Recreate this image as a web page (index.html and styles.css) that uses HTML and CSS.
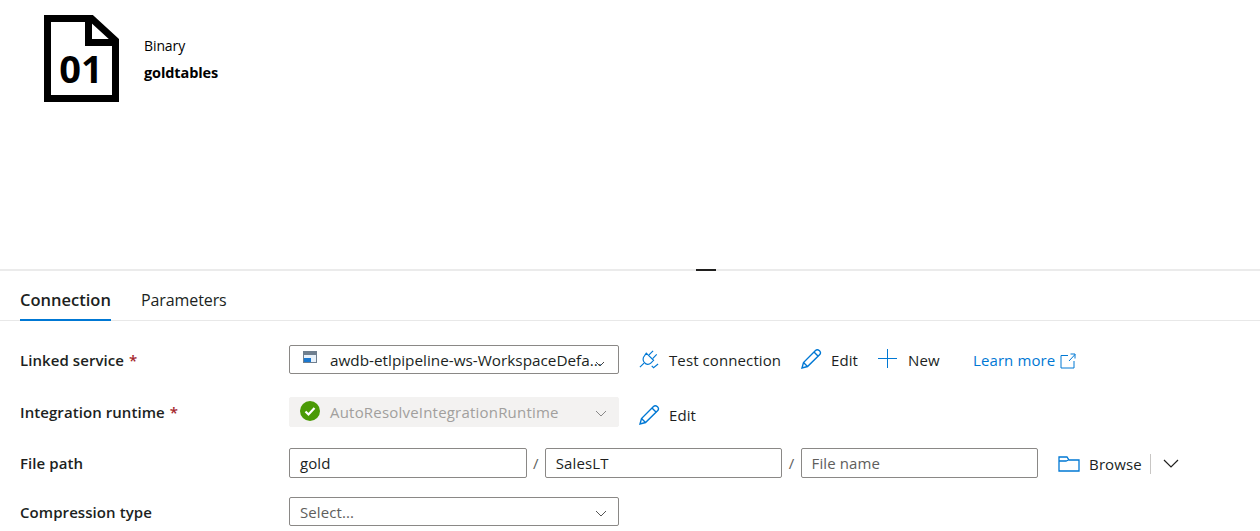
FILE: index.html
```html
<!DOCTYPE html>
<html lang="en-US">
<head>
<title>Binary dataset goldtables</title>
<meta charset="utf-8">
<link rel="stylesheet" href="styles.css">
</head>
<body>

<!-- dataset canvas -->
<div class="canvas">
  <svg class="file-icon" width="75" height="87" viewBox="0 0 75 87">
    <path d="M3.500 3.500H47.500L71.500 25.500V83.500H3.500Z" fill="#fff" stroke="#000" stroke-width="7"/>
    <path d="M44.500 3.500V27.500H71.500" fill="none" stroke="#000" stroke-width="7"/>
    <text x="37" y="68" text-anchor="middle" class="file-digits">01</text>
  </svg>
  <div class="dataset-info">
    <div class="dataset-type">Binary</div>
    <div class="dataset-name">goldtables</div>
  </div>
</div>

<div class="splitter"><span class="splitter-grip"></span></div>

<div class="tabs">
  <span class="tab tab-active">Connection</span>
  <span class="tab">Parameters</span>
</div>

<div class="form">

  <div class="row row-linked">
    <label class="row-label">Linked service <span class="req">*</span></label>
    <div class="field field-wide">
      <svg class="svc-icon" width="14" height="12" viewBox="0 0 14 12">
        <rect width="14" height="12" fill="#6f7f8f"/>
        <rect x="1" y="4" width="12" height="7" fill="#e8f1fa"/>
        <rect x="1" y="7" width="7" height="4" fill="#1a78d0"/>
      </svg>
      <span class="field-text field-clip">awdb-etlpipeline-ws-WorkspaceDefa...</span>
      <svg class="chev chev-linked" width="10" height="6" viewBox="0 0 10 6"><path d="M1 1L5 5L9 1" fill="none" stroke="#444" stroke-width="1"/></svg>
    </div>
    <div class="actions actions-linked">
      <span class="action action-test">
        <svg class="action-icon" width="20" height="20" viewBox="1 2.500 22 20" fill="none" stroke="#0078d4" stroke-width="1.300">
          <path d="M9 6L17 14L14 17C12 19 9 19 7 16.500C5 14.500 5 11 7 9Z"/>
          <path d="M12 8L16.500 3.500M16 12L20.500 7.500M6.500 17L2 21.500"/>
          <path d="M15 20L17 22L22 18"/>
        </svg>
        Test connection
      </span>
      <span class="action action-edit">
        <svg class="action-icon" width="22" height="22" viewBox="1 0 22 22" fill="none" stroke="#0078d4" stroke-width="1.400">
          <path d="M2 20L3.500 14.500L15.500 2.500C16.500 1.500 18 1.500 19.500 2.800C20.800 4 20.800 5.500 19.800 6.500L7.500 18.500Z"/>
          <path d="M3.500 14.500L7.500 18.500M14 4L18.200 8.200"/>
        </svg>
        Edit
      </span>
      <span class="action action-new">
        <svg class="action-icon" width="20" height="20" viewBox="0 0 20 20" stroke="#0078d4" stroke-width="1"><path d="M9.500 0V19M0 9.500H19"/></svg>
        New
      </span>
      <span class="learn">Learn more
        <svg class="learn-icon" width="16" height="16" viewBox="0 0 16 16" fill="none" stroke="#0078d4" stroke-width="1"><path d="M8 2.500H1V15H14V8M9 8L15 1.500M10.500 1H15V5.500"/></svg>
      </span>
    </div>
  </div>

  <div class="row row-runtime">
    <label class="row-label">Integration runtime <span class="req">*</span></label>
    <div class="field field-wide field-disabled">
      <svg class="ok-icon" width="20" height="20" viewBox="0 0 20 20">
        <circle cx="10" cy="10" r="10" fill="#4a9a06"/>
        <path d="M5.500 10.500L8.500 13.500L14.500 7" fill="none" stroke="#fff" stroke-width="2.200"/>
      </svg>
      <span class="field-text">AutoResolveIntegrationRuntime</span>
      <svg class="chev chev-runtime" width="12" height="7" viewBox="0 0 12 7"><path d="M1 1L6 6L11 1" fill="none" stroke="#888" stroke-width="1"/></svg>
    </div>
    <div class="actions actions-runtime">
      <span class="action action-edit">
        <svg class="action-icon" width="22" height="22" viewBox="1 0 22 22" fill="none" stroke="#0078d4" stroke-width="1.400">
          <path d="M2 20L3.500 14.500L15.500 2.500C16.500 1.500 18 1.500 19.500 2.800C20.800 4 20.800 5.500 19.800 6.500L7.500 18.500Z"/>
          <path d="M3.500 14.500L7.500 18.500M14 4L18.200 8.200"/>
        </svg>
        Edit
      </span>
    </div>
  </div>

  <div class="row row-path">
    <label class="row-label">File path</label>
    <div class="field field-path"><span class="field-text">gold</span></div>
    <span class="slash">/</span>
    <div class="field field-path"><span class="field-text">SalesLT</span></div>
    <span class="slash">/</span>
    <div class="field field-path"><span class="field-text field-hint">File name</span></div>
    <div class="actions actions-path">
      <span class="action action-browse">
        <svg class="action-icon" width="22" height="18" viewBox="0 0 22 18" fill="none" stroke="#0078d4" stroke-width="1.300">
          <path d="M1 16V2H9L11 5H21V16Z"/>
          <path d="M1 6H8L10.500 5"/>
        </svg>
        Browse
      </span>
      <span class="vsep"></span>
      <svg class="chev-dark" width="16" height="9" viewBox="0 0 16 9"><path d="M1 1L8 8L15 1" fill="none" stroke="#201f1e" stroke-width="1.200"/></svg>
    </div>
  </div>

  <div class="row row-compress">
    <label class="row-label">Compression type</label>
    <div class="field field-wide">
      <span class="field-text field-hint">Select...</span>
      <svg class="chev chev-runtime" width="12" height="7" viewBox="0 0 12 7"><path d="M1 1L6 6L11 1" fill="none" stroke="#555" stroke-width="1"/></svg>
    </div>
  </div>

</div>

</body>
</html>
```

FILE: styles.css
```css
html, body { margin: 0; padding: 0; height: 100%; overflow: hidden; background: #fff; }

body { color: #201f1e; font-family: 'Open Sans', 'Noto Sans', sans-serif; font-size: 15px; }

.canvas { display: flex; align-items: flex-start; height: 269px; box-sizing: border-box; padding: 15px 0 0 44px; }
.file-icon { display: block; flex: none; }
.file-digits { font-family: 'Open Sans', sans-serif; font-size: 38px; font-weight: 700; fill: #000; }
.dataset-info { margin: 21px 0 0 25px; color: #000; }
.dataset-type { font-size: 14px; line-height: 20px; letter-spacing: -0.1px; }
.dataset-name { font-size: 14.500px; font-weight: 700; line-height: 20px; margin-top: 7px; letter-spacing: -0.1px; }

.splitter { height: 2px; background: #ebebeb; display: flex; justify-content: center; }
.splitter-grip { width: 20px; height: 2px; background: #201f1e; margin-left: 152px; }

.tabs { display: flex; gap: 30px; height: 50px; box-sizing: border-box; padding-left: 20px; border-bottom: 1px solid #e8e8e8; }
.tab { height: 50px; box-sizing: border-box; padding-top: 17px; font-size: 16px; line-height: 24px; letter-spacing: -0.1px; }
.tab-active { font-size: 16.500px; letter-spacing: 0; font-weight: 600; border-bottom: 2px solid #0078d4; width: 91px; }

.form { padding-left: 20px; }
.row { display: flex; align-items: center; }
.row-linked { margin-top: 24px; }
.row-runtime { margin-top: 23px; }
.row-path { margin-top: 21px; }
.row-compress { margin-top: 19px; }

.row-label { width: 269px; flex: none; font-weight: 600; font-size: 15px; letter-spacing: 0.07px; }
.req { color: #a4262c; margin-left: 1px; }

.field { display: flex; align-items: center; box-sizing: border-box; height: 29px; border: 1px solid #8a8886; border-radius: 2px; padding: 0 10px; background: #fff; }
.field-wide { width: 330px; position: relative; }
.field-path { width: 237.500px; height: 30px; }
.field-text { white-space: nowrap; font-size: 15px; letter-spacing: 0.1px; }
.field-clip { margin-left: 13px; font-size: 15.300px; letter-spacing: 0; }
.field-hint { color: #605e5c; }
.svc-icon { flex: none; margin: -5px 0 0 3px; }

.field-disabled { background: #f3f2f1; border-color: #f3f2f1; color: #a19f9d; height: 30px; }
.field-disabled .field-text { letter-spacing: 0.2px; }
.ok-icon { flex: none; margin: -2px 10px 0 0; }

.chev { position: absolute; }
.chev-linked { right: 13px; top: 15px; }
.chev-runtime { top: 12px; right: 11px; }

.slash { width: 18.300px; flex: none; text-align: center; color: #605e5c; }

.actions { display: flex; align-items: center; margin-left: 20px; }
.actions-linked { margin-top: 1px; }
.actions-linked .action-icon { margin-bottom: 2px; }
.actions-runtime { margin-top: 5px; }
.actions-path { margin-top: 1px; }
.action { display: flex; align-items: center; white-space: nowrap; font-size: 15px; letter-spacing: 0.1px; }
.action-icon { flex: none; margin-right: 8px; }
.action-test .action-icon { margin-right: 10px; }
.action-new .action-icon { margin-right: 10px; }
.action-browse .action-icon { margin-right: 9px; }
.action-test { width: 162px; }
.action-edit { width: 77px; }
.action-new { width: 95px; }
.learn { display: flex; align-items: center; gap: 5px; color: #0078d4; font-size: 15px; letter-spacing: 0.1px; white-space: nowrap; }
.learn-icon { margin-top: 2px; }

.vsep { width: 1px; height: 20px; background: #c8c6c4; margin: 0 12px 0 8px; }
.chev-dark { display: block; }
```
